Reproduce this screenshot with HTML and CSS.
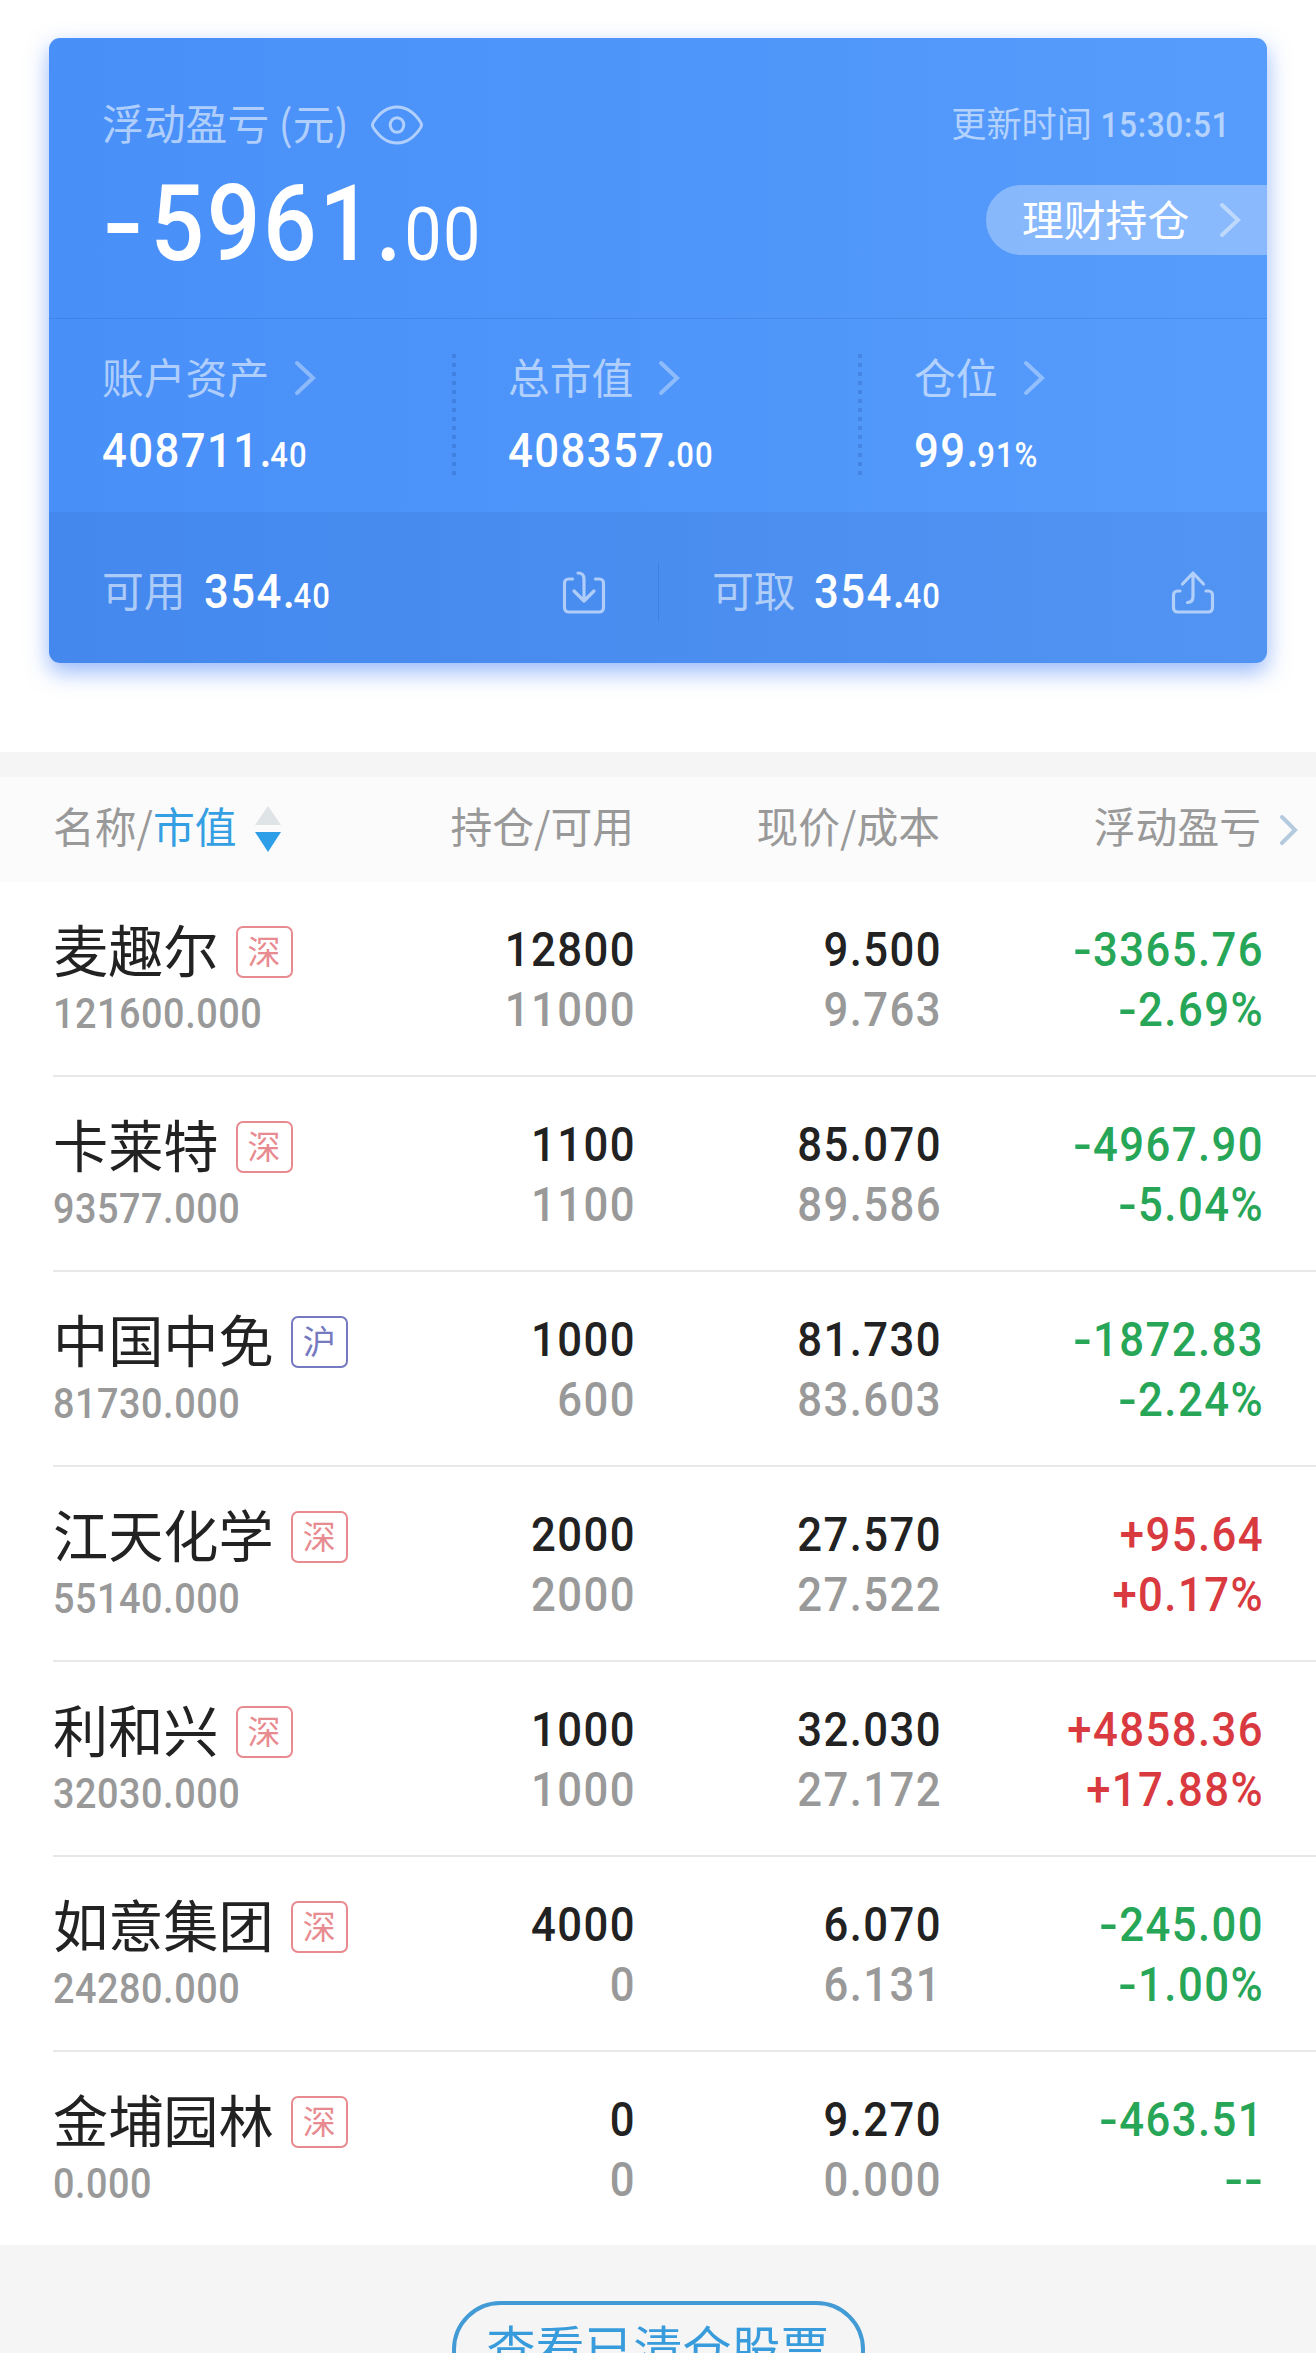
FILE: index.html
```html
<!DOCTYPE html>
<html lang="zh-CN">
<head>
  <meta charset="UTF-8" />
  <meta name="viewport" content="width=device-width, initial-scale=1.0"/>
  <title>持仓</title>
  <link rel="stylesheet" href="styles.css">
</head>
<body>

<!-- Account card -->
<div class="card">
  <div class="summary">
    <div>
      <div class="label title">
        <span>浮动盈亏 (元)</span>
        <svg class="eye" width="54" height="40" viewBox="0 0 54 40" fill="none" stroke="currentColor" stroke-width="3">
          <path d="M3.4 17.2C9 8.500 17 2 27 2s18 6.500 23.600 15.200q1.800 2.800 0 5.600C45 31.500 37 38 27 38S9 31.500 3.400 22.800q-1.800-2.800 0-5.600z"/>
          <ellipse cx="27" cy="20" rx="6.800" ry="7.300"/>
        </svg>
      </div>
      <div class="total num"><i>-</i>5961.<small>00</small></div>
    </div>
    <div class="summary-right">
      <div class="label updated">更新时间 <span class="num">15:30:51</span></div>
      <a class="pill">理财持仓
        <svg class="arrow" width="22" height="36" viewBox="0 0 22 36"><path d="M3 3l16 15L3 33"/></svg>
      </a>
    </div>
  </div>

  <div class="stats">
    <div class="stat">
      <div class="label">账户资产 <svg class="arrow" width="22" height="36" viewBox="0 0 22 36"><path d="M3 3l16 15L3 33"/></svg></div>
      <div class="amount num">408711.<small>40</small></div>
    </div>
    <div class="stat">
      <div class="label">总市值 <svg class="arrow" width="22" height="36" viewBox="0 0 22 36"><path d="M3 3l16 15L3 33"/></svg></div>
      <div class="amount num">408357.<small>00</small></div>
    </div>
    <div class="stat">
      <div class="label">仓位 <svg class="arrow" width="22" height="36" viewBox="0 0 22 36"><path d="M3 3l16 15L3 33"/></svg></div>
      <div class="amount num">99.<small>91%</small></div>
    </div>
  </div>

  <div class="cash">
    <div class="cash-item">
      <span class="label">可用</span>
      <span class="amount num">354.<small>40</small></span>
      <svg class="transfer" width="44" height="44" viewBox="0 0 44 44">
        <path d="M10.500 9H6.500a4 4 0 0 0-4 4v25a4 4 0 0 0 4 4h31a4 4 0 0 0 4-4V13a4 4 0 0 0-4-4h-4"/>
        <path d="M16 3c4.500 0 6 2 6 6v22M12 21l10 10 10-10"/>
      </svg>
    </div>
    <div class="cash-item">
      <span class="label">可取</span>
      <span class="amount num">354.<small>40</small></span>
      <svg class="transfer" width="44" height="44" viewBox="0 0 44 44">
        <path d="M9 21H6.500a4 4 0 0 0-4 4v13a4 4 0 0 0 4 4h31a4 4 0 0 0 4-4V25a4 4 0 0 0-4-4H35"/>
        <path d="M16.500 32.500c4 0 5.500-2 5.500-6V3M11.500 14L22 3l10.500 11"/>
      </svg>
    </div>
  </div>
</div>

<!-- Positions -->
<div class="positions">
  <div class="grid head">
    <div class="sort">名称/<span class="active">市值</span>
      <svg width="28" height="46" viewBox="0 0 28 46"><path fill="#dfe4e7" d="M14 0l13 19H1z"/><path fill="#2f9ee8" d="M14 46L1 26h26z"/></svg>
    </div>
    <div>持仓/可用</div>
    <div>现价/成本</div>
    <div>浮动盈亏</div>
    <svg class="arrow more" width="20" height="32" viewBox="0 0 20 32"><path d="M3 3l13 13L3 29"/></svg>
  </div>

  <div class="grid row">
    <div class="stock"><div class="name">麦趣尔<span class="tag sz">深</span></div><div class="value num">121600.000</div></div>
    <div class="num">12800<br><span class="sub">11000</span></div>
    <div class="num">9.500<br><span class="sub">9.763</span></div>
    <div class="num down"><i>-</i>3365.76<br><i>-</i>2.69%</div>
  </div>
  <div class="grid row">
    <div class="stock"><div class="name">卡莱特<span class="tag sz">深</span></div><div class="value num">93577.000</div></div>
    <div class="num">1100<br><span class="sub">1100</span></div>
    <div class="num">85.070<br><span class="sub">89.586</span></div>
    <div class="num down"><i>-</i>4967.90<br><i>-</i>5.04%</div>
  </div>
  <div class="grid row">
    <div class="stock"><div class="name">中国中免<span class="tag sh">沪</span></div><div class="value num">81730.000</div></div>
    <div class="num">1000<br><span class="sub">600</span></div>
    <div class="num">81.730<br><span class="sub">83.603</span></div>
    <div class="num down"><i>-</i>1872.83<br><i>-</i>2.24%</div>
  </div>
  <div class="grid row">
    <div class="stock"><div class="name">江天化学<span class="tag sz">深</span></div><div class="value num">55140.000</div></div>
    <div class="num">2000<br><span class="sub">2000</span></div>
    <div class="num">27.570<br><span class="sub">27.522</span></div>
    <div class="num up">+95.64<br>+0.17%</div>
  </div>
  <div class="grid row">
    <div class="stock"><div class="name">利和兴<span class="tag sz">深</span></div><div class="value num">32030.000</div></div>
    <div class="num">1000<br><span class="sub">1000</span></div>
    <div class="num">32.030<br><span class="sub">27.172</span></div>
    <div class="num up">+4858.36<br>+17.88%</div>
  </div>
  <div class="grid row">
    <div class="stock"><div class="name">如意集团<span class="tag sz">深</span></div><div class="value num">24280.000</div></div>
    <div class="num">4000<br><span class="sub">0</span></div>
    <div class="num">6.070<br><span class="sub">6.131</span></div>
    <div class="num down"><i>-</i>245.00<br><i>-</i>1.00%</div>
  </div>
  <div class="grid row">
    <div class="stock"><div class="name">金埔园林<span class="tag sz">深</span></div><div class="value num">0.000</div></div>
    <div class="num">0<br><span class="sub">0</span></div>
    <div class="num">9.270<br><span class="sub">0.000</span></div>
    <div class="num down"><i>-</i>463.51<br><i>-</i><i>-</i></div>
  </div>
</div>

<div class="footer">
  <a class="btn-cleared">查看已清仓股票</a>
</div>

</body>
</html>
```
FILE: styles.css
```css
* {
  box-sizing: border-box;
}

body {
  font-family: "Noto Sans CJK SC", sans-serif;
  font-size: 41.8px;
  color: #222;
  background-color: #fff;
  margin: 0;
  padding-top: 38px;
  height: 2353px;
  overflow: hidden;
}

/* condensed figures */
.num {
  font-family: Roboto, sans-serif;
  font-weight: 500;
  transform: scaleX(0.9);
  transform-origin: left;
}

.num i {
  font-style: normal;
  display: inline-block;
  text-align: left;
  transform: scaleX(1.25);
  transform-origin: left;
}

.arrow {
  fill: none;
  stroke: currentColor;
  stroke-width: 4;
  stroke-linecap: round;
  opacity: 0.65;
}

/* Account card */
.card {
  width: 1218px;
  height: 625px;
  margin: 0 0 89px 49px;
  border-radius: 11px;
  overflow: hidden;
  color: #fff;
  background: linear-gradient(to right, #488ff8, #569cfc);
  box-shadow: 0 9px 22px rgba(50, 115, 245, 0.5);
}

.label {
  color: rgba(255, 255, 255, 0.56);
  line-height: 50px;
}

.summary {
  height: 280px;
  padding: 59px 0 0 53px;
  display: flex;
  justify-content: space-between;
}

.title {
  display: flex;
  align-items: center;
  gap: 21px;
}

.eye {
  margin-top: 5px;
}

.total {
  font-size: 105px;
  line-height: 110px;
  letter-spacing: 2.8px;
  margin-top: 23px;
  padding-left: 1px;
}

.total small {
  font-size: 74px;
  font-weight: 400;
  letter-spacing: 1.5px;
}

.total i {
  width: 53px;
}

.summary-right {
  display: flex;
  flex-direction: column;
  align-items: flex-end;
}

.updated {
  font-size: 35.2px;
  padding-right: 37px;
}

.updated .num {
  display: inline-block;
  letter-spacing: 0.7px;
  margin-left: -14px;
  transform-origin: right;
}

.pill {
  width: 281px;
  height: 70px;
  margin-top: 35px;
  padding: 0 26px 4px 36px;
  border-radius: 35px 0 0 35px;
  background-color: rgba(255, 255, 255, 0.31);
  display: flex;
  align-items: center;
  justify-content: space-between;
  white-space: nowrap;
}

.pill .arrow {
  opacity: 0.45;
  margin-top: 4px;
}

.stats {
  height: 194px;
  border-top: 1px solid rgba(0, 40, 120, 0.12);
  display: grid;
  grid-template-columns: repeat(3, 1fr);
}

.stat {
  padding: 32px 0 0 54px;
  position: relative;
}

.stat .label {
  display: flex;
  align-items: center;
  gap: 25px;
  margin-left: -1px;
}

.stat .arrow {
  margin-top: 4px;
}

.stat + .stat::before {
  content: "";
  position: absolute;
  left: -3px;
  top: 35px;
  width: 4px;
  height: 121px;
  background: repeating-linear-gradient(to bottom, rgba(0, 40, 120, 0.17) 0 4px, transparent 4px 9px);
}

.amount {
  font-size: 48.500px;
  line-height: 60px;
  letter-spacing: 1.6px;
  white-space: nowrap;
}

.stat .amount {
  margin-top: 20px;
  margin-left: -1px;
}

.amount small {
  font-size: 34.5px;
  letter-spacing: 1px;
  margin-left: -3px;
}

.cash {
  height: 151px;
  padding-top: 50px;
  background-color: rgba(0, 20, 70, 0.055);
  display: grid;
  grid-template-columns: 1fr 1fr;
}

.cash-item {
  height: 60px;
  padding: 0 52px 0 53px;
  display: flex;
  align-items: center;
}

.cash-item + .cash-item {
  border-left: 1px solid rgba(0, 40, 120, 0.12);
}

.cash-item .label {
  margin: -6px 18px 0 0;
}

.cash-item .amount {
  margin-top: 4px;
}

.transfer {
  margin-left: auto;
  fill: none;
  stroke: rgba(255, 255, 255, 0.56);
  stroke-width: 3.2;
  stroke-linecap: round;
  stroke-linejoin: round;
}

/* Positions */
.positions {
  border-top: 25px solid #f5f5f5;
}

.grid {
  display: grid;
  grid-template-columns: 302px 281px 306px 322px;
  margin-left: 53px;
  text-align: right;
}

.head {
  margin: 0;
  padding-left: 53px;
  height: 105px;
  line-height: 97px;
  color: #999;
  background-color: #fbfbfb;
  grid-template-columns: 300px 281px 306px 321px 1fr;
}

.sort {
  height: 97px;
  display: flex;
  align-items: center;
  white-space: nowrap;
}

.sort svg {
  margin: 7px 0 0 17px;
}

.active {
  color: #359fe3;
}

.more {
  margin: 37px 0 0 18px;
  color: #8fb0cf;
}

.row {
  height: 195px;
  padding-top: 38px;
  border-bottom: 2px solid #e8e8e8;
  font-size: 48.5px;
  line-height: 60px;
  letter-spacing: 1.6px;
}

.row > .num {
  transform-origin: right;
}

.row:last-child {
  height: 193px;
  border-bottom: none;
}

.stock {
  text-align: left;
  margin-top: -4px;
}

.name {
  font-size: 55.2px;
  line-height: 65px;
  letter-spacing: 0;
  display: flex;
  align-items: center;
  white-space: nowrap;
}

.tag {
  width: 57px;
  height: 52px;
  margin: 6px 0 0 17px;
  border: 2px solid;
  border-radius: 7px;
  font-size: 33px;
  line-height: 45px;
  text-align: center;
}

.sz {
  color: #e88b90;
}

.sh {
  color: #7479c0;
}

.value {
  font-size: 42px;
  line-height: 65px;
  letter-spacing: 0.6px;
  color: #999;
}

.sub {
  color: #999;
}

.row i {
  width: 22px;
}

.down {
  color: #27a658;
}

.up {
  color: #d93a3f;
}

.footer {
  height: 108px;
  padding-top: 56px;
  background-color: #f5f5f5;
  display: flex;
  justify-content: center;
}

.btn-cleared {
  width: 413px;
  height: 97px;
  flex: none;
  border: 4px solid #439bd6;
  border-radius: 49px;
  color: #389cdc;
  font-size: 49px;
  line-height: 82px;
  text-align: center;
}
```
